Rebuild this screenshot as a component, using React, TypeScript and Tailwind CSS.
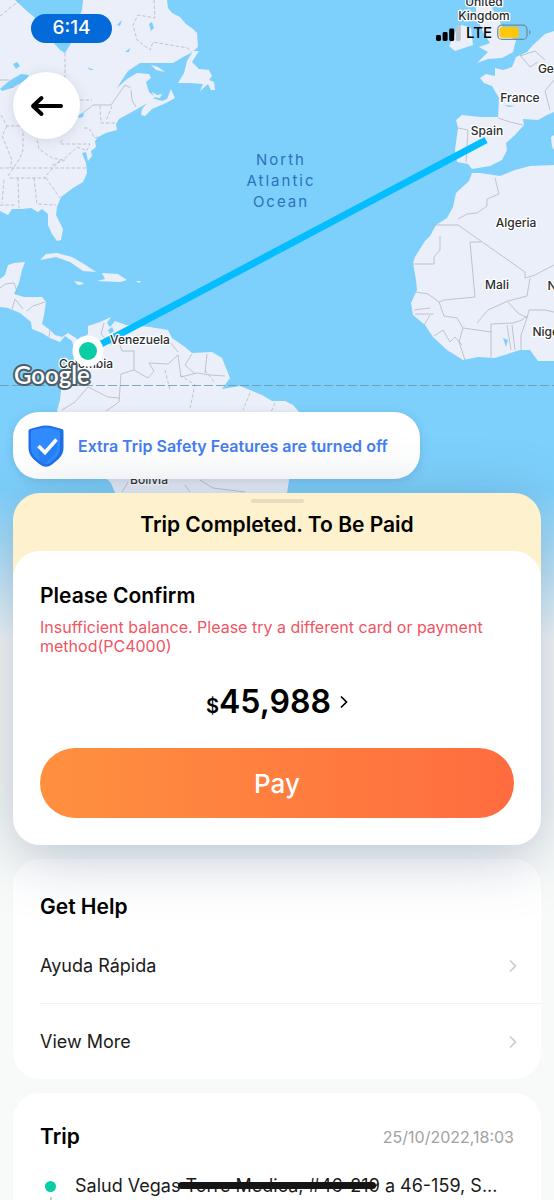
import React from "react";

const LAND = [
  "M0 0H167L168 8 172 13 180 17 186 24 193 29 197 33 198 47 191 53 183 57 173 63H140L128 71 122 80 117 88 127 79 137 73 149 74 151 78 146 82 149 92 155 97 146 104 130 113 119 119 116 124 117 130 106 133 98 137 95 141 96 147 91 151 92 156 88 161 86 152 82 153 86 163 87 173 83 182 73 188 61 197 57 207 56 215 63 229 61 240 57 241 52 234 48 225V214L42 209 38 212 31 208 22 209 12 209 8 215 0 211Z",
  "M152 98 162 101 167 99 171 89 175 98 166 103 152 109 145 116 141 115 142 109 148 102Z",
  "M152 92 157 95 162 94 160 98 154 97Z",
  "M151 65 158 67 165 72 156 70Z",
  "M193 51 199 51 192 62 199 69 209 70 212 76 209 80 214 82 215 90 211 90 208 84 200 91 203 84 190 83 178 83 184 73 187 61Z",
  "M40 260 46 254 57 253 72 257 84 264 96 272 83 271 70 262 56 257Z",
  "M102 273 118 274 127 280 120 282 97 281 105 279Z",
  "M74 281 81 282 84 284 78 285Z",
  "M136 281H141L139 283Z",
  "M0 279 5 275 8 265 14 263 25 262 22 270 19 283 14 294 24 297 42 297 46 302 44 315 42 324 50 330 55 335 62 337 68 333 76 338 80 342 88 334 88 326 100 322 111 317 107 323 110 327 115 321 126 325 150 327 168 330 172 338 185 347 192 353 212 352 222 358 230 378 222 389 240 386 262 395 272 401 285 401 293 405 300 413 303 430 298 455 289 480 286 500H118L111 483 97 470 78 445 60 422 57 411 60 400 62 382 72 368 75 352 72 341 65 336 60 342 50 338 42 333 32 329 31 322 20 313 8 308 0 307Z",
  "M457 28 462 25 471 28 473 45 455 51 449 46 453 38Z",
  "M475 0H487L492 8 499 20 505 32 512 38 516 40 513 52 502 58 488 59 477 63 488 52 479 47 490 43 483 32 477 18Z",
  "M554 31 545 34 533 45 527 52 516 57 512 67 503 70 495 68 495 76 486 74 480 78 484 83 492 86 499 98 498 117 480 117 462 115 456 120 458 128 455 150 457 162 468 164 472 169 490 166 502 160 507 150 506 143 515 135 524 125 523 119 538 120 547 115 554 112Z",
  "M554 165 530 166 515 170 500 176 480 173 472 173 469 181 456 193 453 207 447 218 436 225 430 236 425 241 415 257 413 263 416 280 417 290 411 303 413 315 425 325 433 337 447 350 463 360 478 357 495 358 520 350H530L538 361H554Z",
  "M551 137 554 135V150L552 147Z",
];

const WATER = [
  "M15 0H83L82 10 77 22 71 43 65 53 60 50 53 42 40 22 28 12Z",
  "M0 89 9 81 21 74 29 75 26 80 12 88 2 91Z",
  "M13 64 17 62 20 66 16 69Z",
  "M149 24 152 22 154 28 151 31Z",
  "M117 25 122 20 120 26Z",
  "M125 52 130 48 129 52Z",
  "M87 67 94 70 90 70Z",
  "M79 115 84 112 83 117 78 118Z",
  "M108 330 112 327 114 331 110 334Z",
  "M503 338 508 340 506 347Z",
  "M504 105 515 106 509 107Z",
];

const DASHED = [
  "M65 53V80",
  "M0 16 20 0",
  "M154 0 155 18 138 15 133 25 137 40 150 50 153 42 188 48 191 52",
  "M80 100H92M84 128H88L92 132 94 138 98 137",
  "M100 106 101 123H116M112 106 106 121",
  "M62 140 60 144H90L86 152",
  "M0 168H86M10 178H46M18 178 19 208M34 178 37 204 56 205M0 205H15M4 180 2 203",
  "M23 127V150L20 158 8 176M37 140 39 149 52 158 63 160 77 147 85 150M60 160 44 178",
  "M1 115 7 126H23M7 126 2 136 12 160 10 168M52 165 65 160",
  "M46 178 60 198",
  "M165 370 170 390M180 375 195 385 190 408M205 370 215 383M250 393 243 410M275 403 271 412",
];

const BORDERS = [
  "M84 112 93 105H111L125 85 131 88M131 90 132 100 136 107",
  "M0 80H9M9 88 14 87",
  "M0 288 5 284 14 283 18 294M12 309 15 299 23 309M27 311 33 306 45 302M49 337 50 330",
  "M104 323 101 334 110 344 119 342 122 351 134 351V370L121 374 119 402 106 411M62 410 75 402 88 387 98 392 108 397 119 398",
  "M134 370 148 378 154 371 149 363 168 364 178 355 181 377 197 373 210 375 225 376M170 342 178 352M192 354 185 365 195 374M207 354 205 373",
  "M128 482 122 492M185 485 190 492M200 480 213 488 245 492",
  "M498 118 510 122 523 125M458 128 468 130 466 162",
  "M520 56 535 51 545 60M538 62 530 67 520 55M554 80 545 91 550 110",
  "M458 219 467 214 477 213 487 206 487 199 499 194 495 178",
  "M433 225H458L525 272V278L535 275 554 265M440 236V250L434 257V264H413M481 242H470L475 297 444 300 439 302M530 278 527 296 508 301 488 310 477 323M439 302 444 316 457 318 463 328 491 332",
  "M416 292 428 294 439 302M414 310 430 308M415 314 434 314M430 315 424 325M434 336 443 330 450 342 455 337 462 345M463 328 459 342 465 360M491 357V324L513 323 522 320 527 316M507 325 511 350M512 325 515 350M527 318 521 335V350M508 302 518 313 527 318 529 310 545 310 554 312",
];

const PLACES: { name: string; x: number; y: number }[] = [
  { name: "United", x: 484, y: 6 },
  { name: "Kingdom", x: 484, y: 20 },
  { name: "France", x: 520, y: 102 },
  { name: "Spain", x: 487, y: 135 },
  { name: "Algeria", x: 516, y: 227 },
  { name: "Mali", x: 497, y: 289 },
  { name: "Venezuela", x: 140, y: 344 },
  { name: "Colombia", x: 86, y: 368 },
  { name: "Bolivia", x: 149, y: 484 },
  { name: "Germany", x: 564, y: 73 },
  { name: "Niger", x: 563, y: 290 },
  { name: "Nigeria", x: 553, y: 336 },
];

function RouteMap() {
  return (
    <svg
      className="absolute inset-x-0 top-0 h-[640px] w-full"
      viewBox="0 0 554 640"
      preserveAspectRatio="xMidYMin slice"
      role="img"
      aria-label="Trip route from Colombia to Spain"
    >
      <defs>
        <linearGradient id="fade" x1="0" y1="0" x2="0" y2="1">
          <stop offset="0" stopColor="#f8faf9" stopOpacity="0" />
          <stop offset="1" stopColor="#f8faf9" />
        </linearGradient>
      </defs>
      <rect width="554" height="640" fill="#7dd0fb" />
      {LAND.map((d) => (
        <path key={d} d={d} fill="#ebeff9" />
      ))}
      {WATER.map((d) => (
        <path key={d} d={d} fill="#7dd0fb" />
      ))}
      <g fill="none" stroke="#adb0b8" strokeWidth="0.7">
        {BORDERS.map((d) => (
          <path key={d} d={d} />
        ))}
        {DASHED.map((d) => (
          <path key={d} d={d} strokeDasharray="3.5 2" />
        ))}
      </g>
      <path d="M0 385.5H554" stroke="#6d94ab" strokeWidth="0.8" strokeDasharray="9 3" />
      <g fill="#2c71bd" fontSize="15" textAnchor="middle" letterSpacing="2">
        <text x="281" y="165">North</text>
        <text x="281" y="186">Atlantic</text>
        <text x="281" y="207">Ocean</text>
      </g>
      <path d="M88 351 486 140" stroke="#03bdff" strokeWidth="7" />
      <g
        fill="#2b2d30"
        stroke="#ffffff"
        strokeWidth="2.5"
        strokeLinejoin="round"
        paintOrder="stroke"
        fontSize="12"
        fontWeight="500"
        textAnchor="middle"
      >
        {PLACES.map((p) => (
          <text key={p.name} x={p.x} y={p.y}>
            {p.name}
          </text>
        ))}
      </g>
      <circle cx="88" cy="351" r="15.5" fill="#fff" />
      <circle cx="88" cy="351" r="9" fill="#09cda5" />
      <text
        x="14"
        y="384"
        fontSize="24"
        fontWeight="600"
        fill="#fff"
        stroke="#4e5d68"
        strokeWidth="4"
        strokeLinejoin="round"
        paintOrder="stroke"
        className="font-[Lato,sans-serif]"
      >
        Google
      </text>
      <rect y="490" width="554" height="150" fill="url(#fade)" />
    </svg>
  );
}

function StatusBar() {
  return (
    <div className="flex items-center justify-between pt-[14px] pr-[23px] pl-[31px]">
      <span className="flex h-[29px] w-[81px] items-center justify-center rounded-full bg-[#0469d9] text-[19px] font-medium text-white">
        6:14
      </span>
      <div className="mt-2 flex items-center gap-[5px]">
        <svg width="25" height="16" viewBox="0 0 25 16" aria-hidden="true">
          <rect x="0" y="10" width="5" height="6" rx="1.4" />
          <rect x="6.6" y="7" width="5" height="9" rx="1.4" />
          <rect x="13.2" y="3.5" width="5" height="12.5" rx="1.4" />
          <rect x="19.8" y="0.5" width="5" height="15.5" rx="1.4" fill="#bfc5d0" />
        </svg>
        <span className="text-[15px] leading-4 font-medium">LTE</span>
        <svg width="34" height="17" viewBox="0 0 36 17" aria-hidden="true">
          <rect x="0.8" y="0.8" width="31" height="15" rx="4.5" fill="none" stroke="#708a98" strokeWidth="1.3" />
          <rect x="2.6" y="2.6" width="20.500" height="11.4" rx="2.5" fill="#fdc70a" />
          <path d="M34 6c2 .6 2 4 0 4.700Z" fill="#708a98" />
        </svg>
      </div>
    </div>
  );
}

function ShieldIcon() {
  return (
    <svg width="36" height="42" viewBox="0 0 36 42" aria-hidden="true" className="shrink-0">
      <path d="M18 .5C23 .5 28 2.500 34 4Q35.500 4.500 35.500 6V23C35.500 31 29 35.500 24 39.500Q18 44 12 39.500C7 35.500.5 31 .5 23V6Q.5 4.500 2 4C8 2.500 13 .5 18 .5Z" fill="#1f6fe9" />
      <path d="M17.500 2.500C22 2.500 27 4.500 32 5.500V23C32 30 27 33.500 22.500 37.500Q18 41 13 37.500C8.500 33.500 3 30 3 23V5.500C8 4.500 13 2.500 17.500 2.500Z" fill="#2f8bff" />
      <path d="m10 23 6 7 14-14-2 12-11 11-5-2Z" fill="#1b6ce6" opacity=".35" />
      <path d="m10.500 21 6.500 6.500L28.500 14.500" fill="none" stroke="#fff" strokeWidth="3.600" />
    </svg>
  );
}

function Chevron({ className }: { className: string }) {
  return (
    <svg className={className} viewBox="0 0 8 14" fill="none" stroke="currentColor" aria-hidden="true">
      <path d="m1 1.500 5.500 5.500L1 12.500" strokeWidth="1.700" />
    </svg>
  );
}

function HelpRow({ label }: { label: string }) {
  return (
    <a href="#help" className="flex h-[75px] items-center justify-between pr-6 text-lg text-[#1a1a1a]">
      {label}
      <Chevron className="h-[14px] w-2 text-[#cccccc]" />
    </a>
  );
}

export default function App() {
  return (
    <div className="relative flex h-screen flex-col overflow-hidden bg-[#f8faf9] font-[Inter,sans-serif] text-black">
      <RouteMap />

      <header className="relative h-[412px] shrink-0">
        <StatusBar />
        <button
          type="button"
          aria-label="Back"
          className="mt-[29px] ml-[13px] flex size-[67px] items-center justify-center rounded-full bg-white shadow-[0_2px_12px_rgba(60,80,120,0.15)]"
        >
          <svg width="34" height="22" viewBox="0 0 34 22" fill="none" stroke="#000" strokeWidth="4" strokeLinecap="round" strokeLinejoin="round" aria-hidden="true">
            <path d="M31 11H3.500M11.500 3 3 11l8.500 8" />
          </svg>
        </button>
      </header>

      <main className="relative flex flex-1 flex-col gap-[14px] px-[13px]">
        <button
          type="button"
          className="flex h-[67px] shrink-0 items-center gap-[14px] self-start rounded-[26px] bg-white pr-8 pl-[15px] text-base font-semibold text-[#437df0] shadow-[0_2px_10px_rgba(60,90,130,0.2)]"
        >
          <ShieldIcon />
          Extra Trip Safety Features are turned off
        </button>

        <section className="relative z-10 shrink-0 rounded-[27px] bg-[#fef1cd] shadow-[0_10px_60px_rgba(60,85,125,0.35)]">
          <div className="flex h-[58px] flex-col items-center pt-[6px]">
            <span className="h-1 w-[53px] rounded-full bg-[#e5dbc0]" />
            <h1 className="mt-2 text-[21px] leading-7 font-semibold">Trip Completed. To Be Paid</h1>
          </div>
          <div className="rounded-[27px] bg-white px-[27px] pt-[31px] pb-[27px]">
            <h2 className="text-[21px] leading-7 font-semibold">Please Confirm</h2>
            <p className="mt-2 text-base leading-[19px] text-[#f05563]">
              Insufficient balance. Please try a different card or payment method(PC4000)
            </p>
            <button type="button" className="mx-auto mt-[26px] flex h-10 items-center" aria-label="Fare $45,988, view details">
              <span className="flex items-baseline font-semibold">
                <span className="text-[20px]">$</span>
                <span className="text-[32px] leading-10">45,988</span>
              </span>
              <Chevron className="ml-[9px] h-[14px] w-2" />
            </button>
            <button
              type="button"
              className="mt-[26px] flex h-[70px] w-full items-center justify-center rounded-full bg-linear-to-r from-[#ff903f] to-[#ff6c3f] text-[26px] font-medium text-white"
            >
              Pay
            </button>
          </div>
        </section>

        <section className="shrink-0 rounded-[27px] bg-white pt-[34px] pl-[27px]">
          <h2 className="text-[21px] leading-7 font-semibold">Get Help</h2>
          <nav className="mt-2 divide-y divide-[#f2f2f2]">
            <HelpRow label="Ayuda Rápida" />
            <HelpRow label="View More" />
          </nav>
        </section>

        <section className="flex-1 rounded-t-[27px] bg-white px-[27px] pt-[30px]">
          <div className="flex items-center justify-between">
            <h2 className="text-[21px] leading-7 font-semibold">Trip</h2>
            <time className="text-base text-[#a2a2a2]">25/10/2022,18:03</time>
          </div>
          <div className="mt-[21px] flex gap-[19px]">
            <div className="flex w-4 flex-col items-center pt-[9px] pl-[5px]">
              <span className="size-[11px] shrink-0 rounded-full bg-[#09cda5]" />
              <span className="mt-[5px] h-8 w-[2px] bg-[#cccccc]" />
            </div>
            <p className="text-lg leading-7 whitespace-nowrap text-[#1a1a1a]">
              Salud Vegas Torre Medica, #46-219 a 46-159, S...
            </p>
          </div>
        </section>
      </main>

      <div className="absolute bottom-[11px] left-1/2 z-20 h-[7px] w-[198px] -translate-x-1/2 rounded-full bg-[#151515]" />
    </div>
  );
}
